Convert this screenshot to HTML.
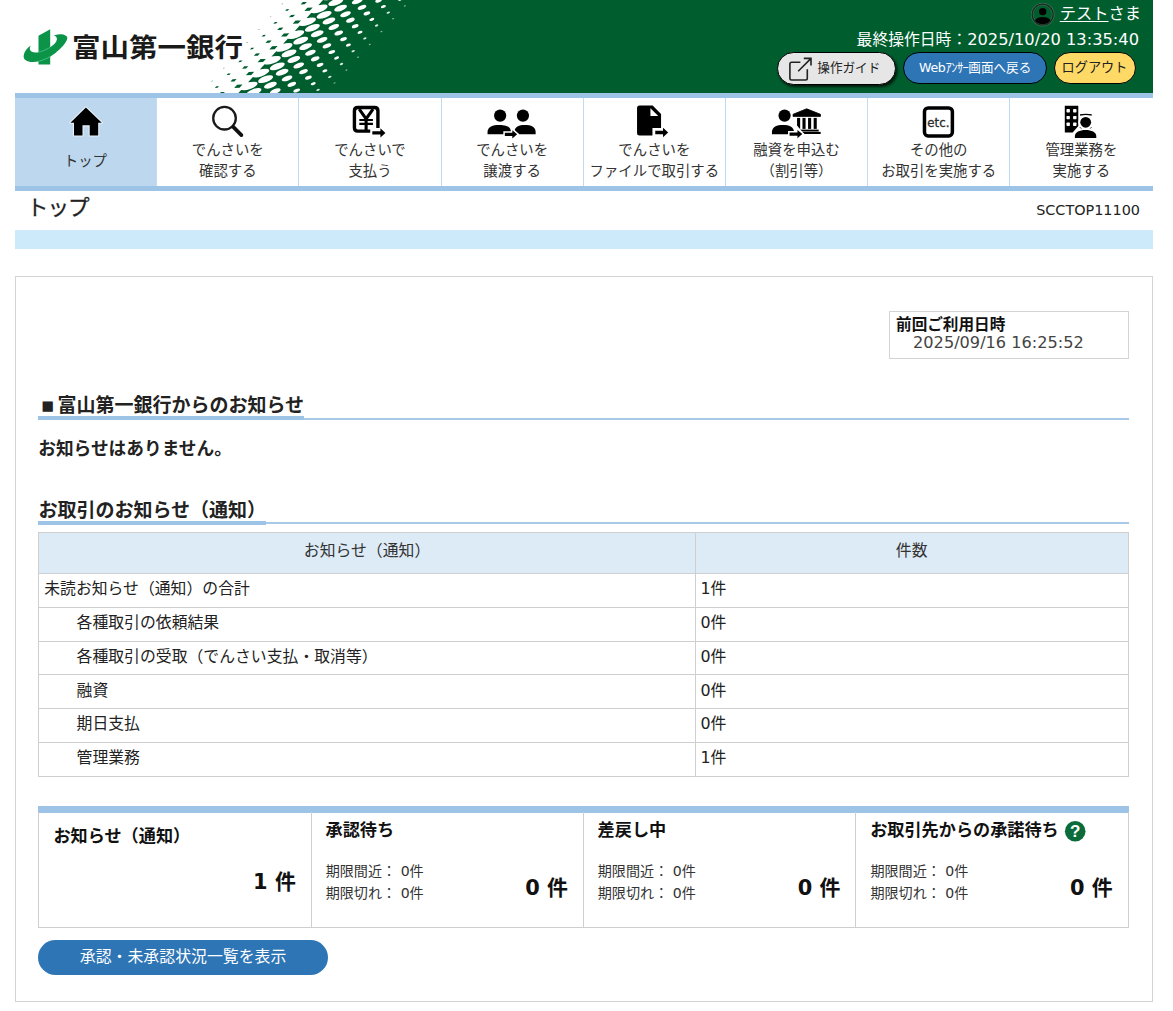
<!DOCTYPE html>
<html lang="ja">
<head>
<meta charset="utf-8">
<title>トップ</title>
<style>
html,body{margin:0;padding:0;background:#fff;}
body{width:1173px;height:1011px;position:relative;overflow:hidden;color:#222;
  font-family:"DejaVu Sans","Noto Sans CJK JP",sans-serif;font-size:15px;}
.abs{position:absolute;}
.nw{white-space:nowrap;}
#hdr{position:absolute;left:15px;top:0;width:1137.5px;height:93px;background:#fff;overflow:hidden;}
#logo-text{position:absolute;left:57px;top:27px;transform:scaleY(.925);transform-origin:0 33.5px;font-family:"Liberation Sans","Noto Sans CJK JP",sans-serif;font-weight:700;font-size:28.5px;line-height:40px;color:#1a1a1a;white-space:nowrap;letter-spacing:0px;}
.hline{position:absolute;right:13.5px;color:#fff;font-size:16.25px;white-space:nowrap;line-height:20px;}
.btn{position:absolute;box-sizing:border-box;border:1.8px solid #000;border-radius:18px;white-space:nowrap;text-align:center;}
/* nav */
#nav{position:absolute;left:15px;top:93px;width:1137.5px;height:98px;box-sizing:border-box;border-top:5px solid #9dc3e6;border-bottom:5px solid #9dc3e6;background:#fff;}
.ni{position:absolute;top:0;height:88px;box-sizing:border-box;border-right:1.4px solid #c1dbf2;text-align:center;font-size:14.4px;line-height:21.2px;color:#333;}
.ni.act{background:#bdd7ee;}
.ni svg{position:absolute;left:0;top:0;}
.ni .lb{position:absolute;left:0;right:0;white-space:nowrap;}
/* content */
h2.sec{position:absolute;margin:0;left:38.4px;width:1090.2px;box-sizing:border-box;border-bottom:2.3px solid #a9c9e8;font-size:19.0px;font-weight:700;height:26px;color:#222;white-space:nowrap;}
h2.sec span{position:absolute;left:0;bottom:-2.3px;border-bottom:4.5px solid #9dc3e6;height:23px;line-height:25px;}
h2.sec i{display:inline-block;font-style:normal;width:19.1px;font-size:13.4px;text-align:center;vertical-align:1.6px;}
table.t{position:absolute;left:38.4px;top:532.3px;width:1090.2px;border-collapse:collapse;table-layout:fixed;font-size:15.85px;color:#222;}
table.t th,table.t td{border:1.3px solid #cfcfcf;box-sizing:border-box;padding:0 0 5.5px 4.8px;text-align:left;font-weight:400;white-space:nowrap;}
table.t th{background:#ddebf7;text-align:center;height:40.9px;padding:0 0 7.5px 0;color:#333;}
table.t td{height:33.75px;}
table.t td.in{padding-left:37.2px;}
.cell{position:absolute;top:812px;height:115.5px;box-sizing:border-box;border:1.3px solid #cfcfcf;border-top:none;}
.cell .ttl{position:absolute;left:14px;font-weight:700;font-size:17.15px;white-space:nowrap;line-height:22px;color:#111;}
.cell .sm{position:absolute;left:14.2px;font-size:14.1px;white-space:nowrap;line-height:22px;color:#333;}
.cell .big{position:absolute;right:15px;font-weight:700;font-size:20.9px;white-space:nowrap;line-height:28px;color:#111;}
</style>
</head>
<body>

<!-- ===== header ===== -->
<div id="hdr">
<svg width="1137.5" height="93" viewBox="15 0 1137.5 93" style="position:absolute;left:0;top:0">
<polygon points="331.9,-5 1153,-5 1153,98 238.1,98" fill="#005e2e"/>
<g fill="#005e2e"><polygon points="294.3,-8.6 295.0,-9.3 293.7,-9.3 293.0,-8.5" opacity="0.6"/><polygon points="282.6,4.3 283.3,3.5 282.0,3.6 281.3,4.3" opacity="0.6"/><polygon points="299.5,-2.1 300.9,-3.7 298.2,-3.6 296.8,-2.0"/><polygon points="316.3,-8.6 318.5,-10.9 314.5,-10.8 312.3,-8.4"/><polygon points="270.9,17.1 271.6,16.4 270.3,16.4 269.6,17.2" opacity="0.6"/><polygon points="287.8,10.7 289.2,9.1 286.5,9.2 285.1,10.8"/><polygon points="304.6,4.3 306.8,1.9 302.8,2.1 300.6,4.4"/><polygon points="321.5,-2.1 324.4,-5.3 319.0,-5.1 316.1,-1.9"/><polygon points="259.2,30.0 259.9,29.2 258.6,29.3 257.9,30.0" opacity="0.6"/><polygon points="276.1,23.6 277.5,22.0 274.8,22.1 273.4,23.7"/><polygon points="292.9,17.1 295.1,14.8 291.1,14.9 288.9,17.3"/><polygon points="309.8,10.7 312.7,7.5 307.3,7.7 304.4,10.9"/><polygon points="327.1,4.9 331.9,-0.4 323.1,-0.1 318.3,5.2"/><polygon points="247.5,42.8 248.2,42.1 246.9,42.1 246.2,42.9" opacity="0.6"/><polygon points="264.4,36.4 265.8,34.8 263.1,34.9 261.7,36.5"/><polygon points="281.2,30.0 283.4,27.6 279.4,27.8 277.2,30.1"/><polygon points="298.1,23.6 301.0,20.4 295.6,20.6 292.7,23.8"/><polygon points="315.4,17.8 320.2,12.5 311.4,12.8 306.6,18.1"/><polygon points="235.8,55.7 236.5,54.9 235.2,55.0 234.5,55.7" opacity="0.6"/><polygon points="252.7,49.3 254.1,47.7 251.4,47.8 250.0,49.4"/><polygon points="269.5,42.8 271.7,40.5 267.7,40.6 265.5,43.0"/><polygon points="286.4,36.4 289.3,33.2 283.9,33.4 281.0,36.6"/><polygon points="303.7,30.6 308.5,25.3 299.7,25.6 294.9,30.9"/><polygon points="224.1,68.5 224.8,67.8 223.5,67.8 222.8,68.6" opacity="0.6"/><polygon points="241.0,62.1 242.4,60.5 239.7,60.6 238.3,62.2"/><polygon points="257.8,55.7 260.0,53.3 256.0,53.5 253.8,55.8"/><polygon points="274.7,49.3 277.6,46.1 272.2,46.3 269.3,49.5"/><polygon points="292.0,43.5 296.8,38.2 288.0,38.5 283.2,43.8"/><polygon points="212.4,81.4 213.1,80.6 211.8,80.7 211.1,81.4" opacity="0.6"/><polygon points="229.3,75.0 230.7,73.4 228.0,73.5 226.6,75.1"/><polygon points="246.1,68.5 248.3,66.2 244.3,66.3 242.1,68.7"/><polygon points="263.0,62.1 265.9,58.9 260.5,59.1 257.6,62.3"/><polygon points="280.3,56.3 285.1,51.0 276.3,51.3 271.5,56.6"/><polygon points="200.7,94.2 201.4,93.5 200.1,93.5 199.4,94.3" opacity="0.6"/><polygon points="217.6,87.8 219.0,86.2 216.3,86.3 214.9,87.9"/><polygon points="234.4,81.4 236.6,79.0 232.6,79.2 230.4,81.5"/><polygon points="251.3,75.0 254.2,71.8 248.8,72.0 245.9,75.2"/><polygon points="268.6,69.2 273.4,63.9 264.6,64.2 259.8,69.5"/><polygon points="205.9,100.7 207.3,99.1 204.6,99.2 203.2,100.8"/><polygon points="222.7,94.2 224.9,91.9 220.9,92.0 218.7,94.4"/><polygon points="239.6,87.8 242.5,84.6 237.1,84.8 234.2,88.0"/><polygon points="256.9,82.0 261.7,76.7 252.9,77.0 248.1,82.3"/><polygon points="227.9,100.7 230.8,97.5 225.4,97.7 222.5,100.9"/><polygon points="245.2,94.9 250.0,89.6 241.2,89.9 236.4,95.2"/></g>
<g fill="#fff"><ellipse cx="331.0" cy="-4.0" rx="8.90" ry="3.23" transform="rotate(-20 331.0 -4.0)"/><ellipse cx="319.2" cy="8.9" rx="8.90" ry="3.23" transform="rotate(-20 319.2 8.9)"/><ellipse cx="335.8" cy="2.1" rx="7.90" ry="3.01" transform="rotate(-20 335.8 2.1)"/><ellipse cx="352.3" cy="-4.7" rx="6.70" ry="2.71" transform="rotate(-20 352.3 -4.7)"/><ellipse cx="307.6" cy="21.7" rx="8.90" ry="3.23" transform="rotate(-20 307.6 21.7)"/><ellipse cx="324.1" cy="14.9" rx="7.90" ry="3.01" transform="rotate(-20 324.1 14.9)"/><ellipse cx="340.6" cy="8.1" rx="6.70" ry="2.71" transform="rotate(-20 340.6 8.1)"/><ellipse cx="357.2" cy="1.3" rx="5.60" ry="2.41" transform="rotate(-20 357.2 1.3)"/><ellipse cx="373.8" cy="-5.5" rx="4.50" ry="2.06" transform="rotate(-20 373.8 -5.5)"/><ellipse cx="295.8" cy="34.6" rx="8.90" ry="3.23" transform="rotate(-20 295.8 34.6)"/><ellipse cx="312.4" cy="27.8" rx="7.90" ry="3.01" transform="rotate(-20 312.4 27.8)"/><ellipse cx="328.9" cy="21.0" rx="6.70" ry="2.71" transform="rotate(-20 328.9 21.0)"/><ellipse cx="345.5" cy="14.2" rx="5.60" ry="2.41" transform="rotate(-20 345.5 14.2)"/><ellipse cx="362.0" cy="7.4" rx="4.50" ry="2.06" transform="rotate(-20 362.0 7.4)"/><ellipse cx="378.6" cy="0.6" rx="3.50" ry="1.70" transform="rotate(-20 378.6 0.6)"/><ellipse cx="395.1" cy="-6.2" rx="2.60" ry="1.34" transform="rotate(-20 395.1 -6.2)"/><ellipse cx="284.1" cy="47.4" rx="8.90" ry="3.23" transform="rotate(-20 284.1 47.4)"/><ellipse cx="300.7" cy="40.6" rx="7.90" ry="3.01" transform="rotate(-20 300.7 40.6)"/><ellipse cx="317.2" cy="33.8" rx="6.70" ry="2.71" transform="rotate(-20 317.2 33.8)"/><ellipse cx="333.8" cy="27.0" rx="5.60" ry="2.41" transform="rotate(-20 333.8 27.0)"/><ellipse cx="350.4" cy="20.2" rx="4.50" ry="2.06" transform="rotate(-20 350.4 20.2)"/><ellipse cx="366.9" cy="13.4" rx="3.50" ry="1.70" transform="rotate(-20 366.9 13.4)"/><ellipse cx="383.4" cy="6.6" rx="2.60" ry="1.34" transform="rotate(-20 383.4 6.6)"/><ellipse cx="400.0" cy="-0.2" rx="1.80" ry="0.98" transform="rotate(-20 400.0 -0.2)" opacity="0.85"/><ellipse cx="416.6" cy="-7.0" rx="1.10" ry="0.63" transform="rotate(-20 416.6 -7.0)" opacity="0.55"/><ellipse cx="272.4" cy="60.2" rx="8.90" ry="3.23" transform="rotate(-20 272.4 60.2)"/><ellipse cx="289.0" cy="53.4" rx="7.90" ry="3.01" transform="rotate(-20 289.0 53.4)"/><ellipse cx="305.6" cy="46.6" rx="6.70" ry="2.71" transform="rotate(-20 305.6 46.6)"/><ellipse cx="322.1" cy="39.9" rx="5.60" ry="2.41" transform="rotate(-20 322.1 39.9)"/><ellipse cx="338.7" cy="33.0" rx="4.50" ry="2.06" transform="rotate(-20 338.7 33.0)"/><ellipse cx="355.2" cy="26.2" rx="3.50" ry="1.70" transform="rotate(-20 355.2 26.2)"/><ellipse cx="371.8" cy="19.4" rx="2.60" ry="1.34" transform="rotate(-20 371.8 19.4)"/><ellipse cx="388.3" cy="12.6" rx="1.80" ry="0.98" transform="rotate(-20 388.3 12.6)" opacity="0.85"/><ellipse cx="404.9" cy="5.9" rx="1.10" ry="0.63" transform="rotate(-20 404.9 5.9)" opacity="0.55"/><ellipse cx="260.8" cy="73.1" rx="8.90" ry="3.23" transform="rotate(-20 260.8 73.1)"/><ellipse cx="277.3" cy="66.3" rx="7.90" ry="3.01" transform="rotate(-20 277.3 66.3)"/><ellipse cx="293.8" cy="59.5" rx="6.70" ry="2.71" transform="rotate(-20 293.8 59.5)"/><ellipse cx="310.4" cy="52.7" rx="5.60" ry="2.41" transform="rotate(-20 310.4 52.7)"/><ellipse cx="326.9" cy="45.9" rx="4.50" ry="2.06" transform="rotate(-20 326.9 45.9)"/><ellipse cx="343.5" cy="39.1" rx="3.50" ry="1.70" transform="rotate(-20 343.5 39.1)"/><ellipse cx="360.0" cy="32.3" rx="2.60" ry="1.34" transform="rotate(-20 360.0 32.3)"/><ellipse cx="376.6" cy="25.5" rx="1.80" ry="0.98" transform="rotate(-20 376.6 25.5)" opacity="0.85"/><ellipse cx="393.1" cy="18.7" rx="1.10" ry="0.63" transform="rotate(-20 393.1 18.7)" opacity="0.55"/><ellipse cx="249.1" cy="86.0" rx="8.90" ry="3.23" transform="rotate(-20 249.1 86.0)"/><ellipse cx="265.6" cy="79.2" rx="7.90" ry="3.01" transform="rotate(-20 265.6 79.2)"/><ellipse cx="282.1" cy="72.3" rx="6.70" ry="2.71" transform="rotate(-20 282.1 72.3)"/><ellipse cx="298.7" cy="65.5" rx="5.60" ry="2.41" transform="rotate(-20 298.7 65.5)"/><ellipse cx="315.2" cy="58.8" rx="4.50" ry="2.06" transform="rotate(-20 315.2 58.8)"/><ellipse cx="331.8" cy="52.0" rx="3.50" ry="1.70" transform="rotate(-20 331.8 52.0)"/><ellipse cx="348.4" cy="45.1" rx="2.60" ry="1.34" transform="rotate(-20 348.4 45.1)"/><ellipse cx="364.9" cy="38.4" rx="1.80" ry="0.98" transform="rotate(-20 364.9 38.4)" opacity="0.85"/><ellipse cx="381.4" cy="31.6" rx="1.10" ry="0.63" transform="rotate(-20 381.4 31.6)" opacity="0.55"/><ellipse cx="237.3" cy="98.8" rx="8.90" ry="3.23" transform="rotate(-20 237.3 98.8)"/><ellipse cx="253.9" cy="92.0" rx="7.90" ry="3.01" transform="rotate(-20 253.9 92.0)"/><ellipse cx="270.4" cy="85.2" rx="6.70" ry="2.71" transform="rotate(-20 270.4 85.2)"/><ellipse cx="287.0" cy="78.4" rx="5.60" ry="2.41" transform="rotate(-20 287.0 78.4)"/><ellipse cx="303.5" cy="71.6" rx="4.50" ry="2.06" transform="rotate(-20 303.5 71.6)"/><ellipse cx="320.1" cy="64.8" rx="3.50" ry="1.70" transform="rotate(-20 320.1 64.8)"/><ellipse cx="336.6" cy="58.0" rx="2.60" ry="1.34" transform="rotate(-20 336.6 58.0)"/><ellipse cx="353.2" cy="51.2" rx="1.80" ry="0.98" transform="rotate(-20 353.2 51.2)" opacity="0.85"/><ellipse cx="369.8" cy="44.4" rx="1.10" ry="0.63" transform="rotate(-20 369.8 44.4)" opacity="0.55"/><ellipse cx="258.8" cy="98.0" rx="6.70" ry="2.71" transform="rotate(-20 258.8 98.0)"/><ellipse cx="275.3" cy="91.2" rx="5.60" ry="2.41" transform="rotate(-20 275.3 91.2)"/><ellipse cx="291.8" cy="84.4" rx="4.50" ry="2.06" transform="rotate(-20 291.8 84.4)"/><ellipse cx="308.4" cy="77.6" rx="3.50" ry="1.70" transform="rotate(-20 308.4 77.6)"/><ellipse cx="324.9" cy="70.8" rx="2.60" ry="1.34" transform="rotate(-20 324.9 70.8)"/><ellipse cx="341.5" cy="64.0" rx="1.80" ry="0.98" transform="rotate(-20 341.5 64.0)" opacity="0.85"/><ellipse cx="358.1" cy="57.2" rx="1.10" ry="0.63" transform="rotate(-20 358.1 57.2)" opacity="0.55"/><ellipse cx="280.1" cy="97.3" rx="4.50" ry="2.06" transform="rotate(-20 280.1 97.3)"/><ellipse cx="296.7" cy="90.5" rx="3.50" ry="1.70" transform="rotate(-20 296.7 90.5)"/><ellipse cx="313.2" cy="83.7" rx="2.60" ry="1.34" transform="rotate(-20 313.2 83.7)"/><ellipse cx="329.8" cy="76.9" rx="1.80" ry="0.98" transform="rotate(-20 329.8 76.9)" opacity="0.85"/><ellipse cx="346.4" cy="70.1" rx="1.10" ry="0.63" transform="rotate(-20 346.4 70.1)" opacity="0.55"/><ellipse cx="301.5" cy="96.5" rx="2.60" ry="1.34" transform="rotate(-20 301.5 96.5)"/><ellipse cx="318.1" cy="89.8" rx="1.80" ry="0.98" transform="rotate(-20 318.1 89.8)" opacity="0.85"/><ellipse cx="334.6" cy="83.0" rx="1.10" ry="0.63" transform="rotate(-20 334.6 83.0)" opacity="0.55"/><ellipse cx="306.4" cy="102.6" rx="1.80" ry="0.98" transform="rotate(-20 306.4 102.6)" opacity="0.85"/><ellipse cx="322.9" cy="95.8" rx="1.10" ry="0.63" transform="rotate(-20 322.9 95.8)" opacity="0.55"/></g>
</svg>
  <svg class="abs" style="left:5px;top:25px" width="52" height="44" viewBox="20 25 52 44">
    <defs><clipPath id="barclip"><path d="M38.5 35.8 L50.2 29.2 L50.2 64.5 L38.5 64.5 Z"/></clipPath></defs>
    <path d="M38.5 35.8 L50.2 29.2 L50.2 64.5 L38.5 64.5 Z" fill="#0b9448"/>
    <path id="sw" d="M30.8 45.5 C27 48 24.3 51.5 23.7 55.5 C23 60 27.5 62.3 33.5 62 C41 61.6 49 58 55.5 53 C61.5 48.3 66.5 42.5 67.3 38.6 C67.9 35.6 63.5 34 59.5 34.3 C57.5 34.5 55.5 34.8 53.8 35.3 C56 36.3 57.2 37.8 56.9 39.6 C56.4 42.8 53.5 45.3 50.2 47.3 C46 49.8 41.5 51.7 37.5 52.4 C33.5 53 30.6 51.8 29.9 49.5 C29.6 48.2 30 46.7 30.8 45.5 Z" fill="#0b9448"/>
    <path d="M30.8 45.5 C27 48 24.3 51.5 23.7 55.5 C23 60 27.5 62.3 33.5 62 C41 61.6 49 58 55.5 53 C61.5 48.3 66.5 42.5 67.3 38.6 C67.9 35.6 63.5 34 59.5 34.3 C57.5 34.5 55.5 34.8 53.8 35.3 C56 36.3 57.2 37.8 56.9 39.6 C56.4 42.8 53.5 45.3 50.2 47.3 C46 49.8 41.5 51.7 37.5 52.4 C33.5 53 30.6 51.8 29.9 49.5 C29.6 48.2 30 46.7 30.8 45.5 Z" fill="none" stroke="#49c184" stroke-width="0.9" clip-path="url(#barclip)"/>
  </svg>
  <div id="logo-text">富山第一銀行</div>

  <svg class="abs" style="left:1016px;top:3px" width="24" height="24" viewBox="0 0 24 24">
    <circle cx="11.7" cy="11.6" r="10.6" fill="none" stroke="#7d9a8a" stroke-opacity=".45" stroke-width="2.6"/><circle cx="11.7" cy="11.6" r="10.5" fill="none" stroke="#1c2b22" stroke-width="1.3"/>
    <circle cx="11.7" cy="8.6" r="3.7" fill="#000"/>
    <path d="M3.9 17.6 C5.5 14.8 8.3 14 11.7 14 C15.1 14 17.9 14.8 19.5 17.6 C17.6 20 14.9 21.3 11.7 21.3 C8.5 21.3 5.8 20 3.9 17.6 Z" fill="#000"/>
  </svg>
  <div class="hline" style="top:3.5px;right:11.5px"><span style="text-decoration:underline;text-underline-offset:2px">テスト</span>さま</div>
  <div class="hline" style="top:30px"><span style="font-size:15.8px">最終操作日時：</span>2025/10/20 13:35:40</div>

  <div class="btn" style="left:761.8px;top:51.7px;width:119.5px;height:33.7px;background:#e6e6e6;box-shadow:1.5px 2px 3px rgba(0,0,0,.75);color:#222;font-size:12.6px;line-height:30px;">
    <svg class="abs" style="left:8px;top:3.4px" width="28" height="26" viewBox="786 56 28 26">
      <path d="M800.4 62.3 H791.6 Q789.9 62.3 789.9 64 V78.3 Q789.9 80 791.6 80 H805.6 Q807.3 80 807.3 78.3 V69.2" fill="none" stroke="#222" stroke-width="1.6"/>
      <path d="M798.2 71.2 L810.8 58.6 M803.8 58.4 H811 V65.6" fill="none" stroke="#222" stroke-width="1.6"/>
    </svg>
    <span class="abs nw" style="left:39.5px;top:0">操作ガイド</span>
  </div>
  <div class="btn" style="left:888.4px;top:51.5px;width:143.5px;height:32px;background:#2e75b6;color:#fff;font-size:12.6px;line-height:29px;"><span style="letter-spacing:-.3px">Web</span><span style="letter-spacing:-.6px">ｱﾝｻｰ</span>画面へ戻る</div>
  <div class="btn" style="left:1038.5px;top:51.5px;width:82px;height:32px;background:#ffd966;color:#222;font-size:13.2px;line-height:29px;">ログアウト</div>
</div>

<!-- ===== nav ===== -->
<div id="nav">
<div class="ni act" style="left:0.00px;width:142.19px;"><svg width="142.19" height="88" viewBox="15.00 98 142.19 88"><path d="M85.9 107.5 L101.8 122.7 H98.2 V135.5 H89.7 V125.3 H82.5 V135.5 H74 V122.7 H70.4 Z" fill="#000" stroke="#e9f2fb" stroke-width="2.2" stroke-linejoin="round" paint-order="stroke"/></svg><div class="lb" style="top:52.6px;padding-right:0.5px">トップ</div></div>
<div class="ni" style="left:142.19px;width:142.19px;"><svg width="142.19" height="88" viewBox="157.19 98 142.19 88"><circle cx="224.7" cy="118.2" r="11.3" fill="none" stroke="#1a1a1a" stroke-width="2.3"/><path d="M233.4 126.9 L241.6 135.1" stroke="#111" stroke-width="3.7" stroke-linecap="round"/></svg><div class="lb" style="top:41.6px">でんさいを<br>確認する</div></div>
<div class="ni" style="left:284.38px;width:142.19px;"><svg width="142.19" height="88" viewBox="299.38 98 142.19 88"><path d="M370.6 131.1 H358.2 Q354.8 131.1 354.8 127.7 V110.9 Q354.8 107.5 358.2 107.5 H374.9 Q378.3 107.5 378.3 110.9 V128" fill="none" stroke="#000" stroke-width="3.4"/><path d="M359.6 109.2 L366.5 118.9 L373.4 109.2 M366.5 118 V130.4" fill="none" stroke="#000" stroke-width="3.1"/><path d="M359.7 120 H373.3 M359.7 123.8 H373.3" fill="none" stroke="#000" stroke-width="2.2"/><path d="M372.7 131.3 H380.8 V128.2 L385.8 132.9 L380.8 137.6 V134.5 H372.7 Z" fill="#000"/></svg><div class="lb" style="top:41.6px">でんさいで<br>支払う</div></div>
<div class="ni" style="left:426.56px;width:142.19px;"><svg width="142.19" height="88" viewBox="441.56 98 142.19 88"><circle cx="499.7" cy="115.6" r="6.1" fill="#000"/><path d="M487.1 134.2 V132.0 C487.1 126.4 492.4 124.9 498.9 124.9 C505.3 124.9 510.6 126.4 510.6 132.0 V134.2 Z" fill="#000"/><circle cx="522.5" cy="115.6" r="6.1" fill="#000"/><path d="M513.9 134.2 V132.0 C513.9 126.4 518.7 124.9 524.5 124.9 C530.4 124.9 535.2 126.4 535.2 132.0 V134.2 Z" fill="#000"/><path d="M510 126 L519 139" stroke="#fff" stroke-width="2.4"/><path d="M504.4 132.7 H511.9 V130.2 L516.7 134.3 L511.9 138.4 V135.9 H504.4 Z" fill="#fff" stroke="#fff" stroke-width="3" stroke-linejoin="miter"/><path d="M504.4 132.7 H511.9 V130.2 L516.7 134.3 L511.9 138.4 V135.9 H504.4 Z" fill="#000"/></svg><div class="lb" style="top:41.6px">でんさいを<br>譲渡する</div></div>
<div class="ni" style="left:568.75px;width:142.19px;"><svg width="142.19" height="88" viewBox="583.75 98 142.19 88"><path d="M639.3 105.5 H652.4 L660.8 113.9 V128 H652.2 V135.6 H639.3 Q636.8 135.6 636.8 133.1 V108 Q636.8 105.5 639.3 105.5 Z" fill="#000"/><path d="M650.2 108.3 V116.1 H658 Z" fill="#fff"/><path d="M655.0 130.8 H662.8 V127.7 L667.9 132.5 L662.8 137.3 V134.2 H655.0 Z" fill="#000"/></svg><div class="lb" style="top:41.6px">でんさいを<br>ファイルで取引する</div></div>
<div class="ni" style="left:710.94px;width:142.19px;"><svg width="142.19" height="88" viewBox="725.94 98 142.19 88"><circle cx="784.5" cy="115.6" r="6.1" fill="#000"/><path d="M771.9 134.2 V132.0 C771.9 126.4 776.9 124.9 782.9 124.9 C788.9 124.9 793.9 126.4 793.9 132.0 V134.2 Z" fill="#000"/><path d="M806.6 108.8 L820.4 114.3 V116.4 H793 V114.3 Z" fill="#000" stroke="#000" stroke-width="0.8" stroke-linejoin="round"/><rect x="797" y="117.9" width="3.1" height="11" fill="#000"/><rect x="802.4" y="117.9" width="3.1" height="11" fill="#000"/><rect x="808" y="117.9" width="3.1" height="11" fill="#000"/><rect x="813.6" y="117.9" width="3.1" height="11" fill="#000"/><rect x="796" y="129.6" width="22.6" height="1.9" fill="#000"/><rect x="793.4" y="131.9" width="27.2" height="2.1" fill="#000"/><path d="M795 125 L805 137" stroke="#fff" stroke-width="2.4"/><path d="M789.5 132.5 H797.4 V130.0 L802.2 134.1 L797.4 138.2 V135.7 H789.5 Z" fill="#fff" stroke="#fff" stroke-width="3" stroke-linejoin="miter"/><path d="M789.5 132.5 H797.4 V130.0 L802.2 134.1 L797.4 138.2 V135.7 H789.5 Z" fill="#000"/></svg><div class="lb" style="top:41.6px">融資を申込む<br>（割引等）</div></div>
<div class="ni" style="left:853.12px;width:142.19px;"><svg width="142.19" height="88" viewBox="868.12 98 142.19 88"><rect x="924.6" y="107.9" width="27.9" height="28" rx="3.6" fill="#fff" stroke="#000" stroke-width="3.5"/><text x="938.5" y="126.6" text-anchor="middle" font-family="DejaVu Sans, sans-serif" font-weight="400" font-size="11.8" fill="#2b2b2b" stroke="#2b2b2b" stroke-width="0.3">etc.</text></svg><div class="lb" style="top:41.6px">その他の<br>お取引を実施する</div></div>
<div class="ni" style="left:995.31px;width:142.19px;border-right:none;"><svg width="142.19" height="88" viewBox="1010.31 98 142.19 88"><path d="M1065.1 105.7 H1078.6 V126 L1073 132.4 H1065.1 Z" fill="#000"/><rect x="1066.8" y="109.0" width="3.4" height="3.4" rx="0.7" fill="#fff"/><rect x="1066.8" y="115.9" width="3.4" height="3.4" rx="0.7" fill="#fff"/><rect x="1066.8" y="122.6" width="3.4" height="3.4" rx="0.7" fill="#fff"/><rect x="1073.4" y="109.0" width="3.4" height="3.4" rx="0.7" fill="#fff"/><rect x="1073.4" y="115.9" width="3.4" height="3.4" rx="0.7" fill="#fff"/><rect x="1073.4" y="122.6" width="3.4" height="3.4" rx="0.7" fill="#fff"/><circle cx="1086" cy="122.3" r="7.3" fill="#fff"/><path d="M1080.4 115 Q1086.2 113.6 1092 115" fill="none" stroke="#000" stroke-width="1.3"/><path d="M1073.6 139 V136 C1073.6 131 1079 128.6 1085.8 128.6 C1092.6 128.6 1098 131 1098 136 V139 Z" fill="#fff"/><circle cx="1086" cy="122.3" r="5.4" fill="#000"/><path d="M1080.3 127.3 l1.2 1.2 M1091.7 127.3 l-1.2 1.2" stroke="#000" stroke-width="1"/><path d="M1075.2 137.9 V136 C1075.2 132.2 1080 130 1085.9 130 C1091.8 130 1096.6 132.2 1096.6 136 V137.9 Z" fill="#000"/></svg><div class="lb" style="top:41.6px">管理業務を<br>実施する</div></div>
</div>

<!-- ===== title bar ===== -->
<div class="abs nw" style="left:26.8px;top:192.6px;font-size:21.6px;line-height:30px;color:#222;-webkit-text-stroke:.3px #222;letter-spacing:-1px;">トップ</div>
<div class="abs nw" style="right:33px;top:199.6px;font-size:14.4px;line-height:20px;color:#222;">SCCTOP11100</div>
<div class="abs" style="left:15px;top:230.3px;width:1137.5px;height:19px;background:#cdeafb;"></div>

<!-- ===== panel ===== -->
<div class="abs" style="left:15px;top:275.5px;width:1137.5px;height:726.5px;box-sizing:border-box;border:1.3px solid #d4d4d4;"></div>

<div class="abs" style="left:888.9px;top:311px;width:239.8px;height:47.8px;box-sizing:border-box;border:1.3px solid #d4d4d4;">
  <div class="abs nw" style="left:6.2px;top:2.5px;font-weight:700;font-size:15.6px;line-height:20px;color:#111;">前回ご利用日時</div>
  <div class="abs nw" style="left:23.2px;top:21px;font-size:16.15px;line-height:20px;color:#444;">2025/09/16 16:25:52</div>
</div>

<h2 class="sec" style="top:393.6px"><span><i>■</i>富山第一銀行からのお知らせ</span></h2>
<div class="abs nw" style="left:38.2px;top:437.3px;font-weight:700;font-size:17.7px;line-height:24px;color:#222;">お知らせはありません。</div>
<h2 class="sec" style="top:498.3px"><span>お取引のお知らせ（通知）</span></h2>

<table class="t">
  <colgroup><col style="width:656.3px"><col></colgroup>
  <tr><th>お知らせ（通知）</th><th>件数</th></tr>
  <tr><td>未読お知らせ（通知）の合計</td><td>1件</td></tr>
  <tr><td class="in">各種取引の依頼結果</td><td>0件</td></tr>
  <tr><td class="in">各種取引の受取（でんさい支払・取消等）</td><td>0件</td></tr>
  <tr><td class="in">融資</td><td>0件</td></tr>
  <tr><td class="in">期日支払</td><td>0件</td></tr>
  <tr><td class="in">管理業務</td><td>1件</td></tr>
</table>

<!-- ===== status cells ===== -->
<div class="abs" style="left:38.4px;top:805.8px;width:1090.2px;height:7px;background:#9dc3e6;"></div>
<div class="cell" style="left:38.4px;width:273.4px;">
  <div class="ttl" style="top:13px">お知らせ（通知）</div>
  <div class="big" style="top:56px">1 件</div>
</div>
<div class="cell" style="left:310.5px;width:273.4px;">
  <div class="ttl" style="top:7px">承認待ち</div>
  <div class="sm" style="top:48px">期限間近： 0件</div>
  <div class="sm" style="top:70px">期限切れ： 0件</div>
  <div class="big" style="top:62px">0 件</div>
</div>
<div class="cell" style="left:582.6px;width:273.9px;">
  <div class="ttl" style="top:7px">差戻し中</div>
  <div class="sm" style="top:48px">期限間近： 0件</div>
  <div class="sm" style="top:70px">期限切れ： 0件</div>
  <div class="big" style="top:62px">0 件</div>
</div>
<div class="cell" style="left:855.2px;width:273.4px;">
  <div class="ttl" style="top:7px">お取引先からの承諾待ち</div>
  <svg class="abs" style="left:208px;top:7.5px" width="23" height="23" viewBox="0 0 23 23">
    <circle cx="11.2" cy="11.3" r="10.3" fill="#0b6b3a"/>
    <text x="11.2" y="17.3" text-anchor="middle" font-family="Liberation Sans, sans-serif" font-weight="700" font-size="17" fill="#fff">?</text>
  </svg>
  <div class="sm" style="top:48px">期限間近： 0件</div>
  <div class="sm" style="top:70px">期限切れ： 0件</div>
  <div class="big" style="top:62px">0 件</div>
</div>

<div class="abs nw" style="left:38.4px;top:939.5px;width:289.4px;height:35.3px;border-radius:18px;background:#2e75b6;color:#fff;font-size:15.9px;line-height:33.5px;text-align:center;">承認・未承認状況一覧を表示</div>

</body>
</html>
